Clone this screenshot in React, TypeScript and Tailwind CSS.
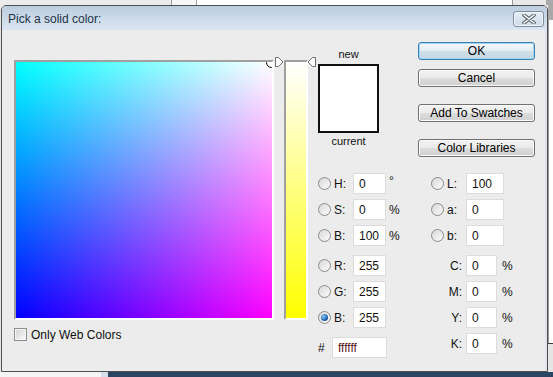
import React from "react";

const font = "font-['Liberation_Sans',Arial,sans-serif]";

function Radio({ checked = false }: { checked?: boolean }) {
  return (
    <div className="w-[13px] h-[13px] rounded-full border border-[#8a8a8a] bg-[linear-gradient(135deg,#d8d8d8,#fbfbfb)] flex items-center justify-center shrink-0">
      {checked && (
        <div className="w-[7px] h-[7px] rounded-full bg-[radial-gradient(circle_at_35%_35%,#8ec8f5,#1b63b4_60%,#0e3f7a)]" />
      )}
    </div>
  );
}

function Field({ value, width = "w-[33px]", color = "text-[#111]" }: { value: string; width?: string; color?: string }) {
  return (
    <div className={`${width} h-[21px] bg-white border border-[#dcdcdc] pl-[5px] flex items-center text-[12px] ${color} shrink-0`}>
      {value}
    </div>
  );
}

function Btn({ label, focused = false }: { label: string; focused?: boolean }) {
  return (
    <div
      className={`h-[18px] w-[117px] rounded-[3px] border flex items-center justify-center text-[12px] text-black ${
        focused
          ? "border-[#3c7fb1] shadow-[inset_0_0_0_1px_#9fd5f5] bg-[linear-gradient(to_bottom,#f4f8fb_0%,#e3edf4_50%,#cfdfea_51%,#c6d8e5_100%)]"
          : "border-[#707070] shadow-[inset_0_0_0_1px_#fcfcfc] bg-[linear-gradient(to_bottom,#f2f2f2_0%,#ebebeb_50%,#dddddd_51%,#cfcfcf_100%)]"
      }`}
    >
      {label}
    </div>
  );
}

function Arrow({ flip = false }: { flip?: boolean }) {
  return (
    <svg width="9" height="10" viewBox="0 0 9 10" className={flip ? "-scale-x-100" : ""}>
      <path d="M0.5 0.5 H3.5 L8 5 L3.5 9.5 H0.5 Z" fill="#fff" stroke="#6e6e6e" strokeWidth="1" />
    </svg>
  );
}

function HsbRow({ label, value, unit, checked = false }: { label: string; value: string; unit?: string; checked?: boolean }) {
  return (
    <div className="flex items-center h-[21px]">
      <Radio checked={checked} />
      <span className="ml-[3px] w-[19px]">{label}</span>
      <Field value={value} />
      {unit && <span className={`ml-[3px] ${unit === "°" ? "-mt-[6px]" : ""}`}>{unit}</span>}
    </div>
  );
}

function CmykRow({ label, value }: { label: string; value: string }) {
  return (
    <div className="flex items-center h-[21px]">
      <span className="w-[31px] text-right">{label}</span>
      <div className="ml-[4px]">
        <Field value={value} width="w-[31px]" />
      </div>
      <span className="ml-[5px]">%</span>
    </div>
  );
}

export default function App() {
  return (
    <div className={`w-[553px] h-[377px] overflow-hidden bg-[#f3f3f3] flex flex-col ${font} text-[12px] text-[#111]`}>
      {/* desktop behind, top strip */}
      <div className="h-[5px] flex shrink-0">
        <div className="w-[171px] bg-[#ebebeb]" />
        <div className="w-[1px] bg-[#a0a0a0]" />
        <div className="w-[24px] bg-[#f7f7f7]" />
        <div className="w-[1px] bg-[#a0a0a0]" />
        <div className="w-[315px] bg-white" />
        <div className="w-[1px] bg-[#9a9a9a]" />
        <div className="w-[33px] bg-[#e9e9e9]" />
        <div className="flex-1 bg-[#a9a9a9]" />
      </div>

      <div className="flex h-[367px] shrink-0">
        <div className="w-[1px] bg-[#e6e6e6]" />

        {/* dialog window */}
        <div className="w-[547px] h-[367px] border border-[#4e4e4e] rounded-t-[5px] overflow-hidden flex flex-col bg-[#ececec]">
          <div className="h-[24px] shrink-0 bg-[linear-gradient(to_bottom,#bccddf,#dbe6f2)] flex items-center pl-[6px] pr-[3px]">
            <span className="text-[12px] text-[#22344a] mt-[2px]">Pick a solid color:</span>
            <div className="ml-auto mt-[2px] w-[31px] h-[16px] rounded-[3px] border border-[#7f8fa3] bg-[linear-gradient(to_bottom,#e6edf5,#cfdbe8)] shadow-[inset_0_0_0_1px_#eef3f8] flex items-center justify-center">
              <svg width="14" height="10" viewBox="0 0 14 10">
                <path d="M2 1 L12 9 M12 1 L2 9" stroke="#5d6670" strokeWidth="3.6" strokeLinecap="round" />
                <path d="M2 1 L12 9 M12 1 L2 9" stroke="#fff" strokeWidth="1.6" strokeLinecap="round" />
              </svg>
            </div>
          </div>

          {/* body */}
          <div className="flex-1 flex pl-[12px] border-r-2 border-[#dfe4ea]">
            {/* picker column */}
            <div className="w-[302px] pt-[30px]">
              <div className="flex">
                <div className="relative w-[260px] h-[260px] border-2 border-t-[#a0a0a0] border-l-[#a0a0a0] border-r-white border-b-white overflow-hidden">
                  <div className="w-[256px] h-[256px] bg-[#0000ff] bg-[linear-gradient(to_right,#000000,#ff0000),linear-gradient(to_bottom,#00ff00,#000000)] bg-blend-screen" />
                  <div className="absolute left-[250px] top-[-5px] w-[11px] h-[11px] rounded-full border border-black shadow-[0_0_0_1px_#fff]" />
                </div>
                <div className="relative w-[42px] h-[260px]">
                  <div className="ml-[10px] w-[24px] h-[260px] border-2 border-t-[#a0a0a0] border-l-[#a0a0a0] border-r-white border-b-white">
                    <div className="w-[20px] h-[256px] bg-[linear-gradient(to_bottom,#ffffff,#ffff00)]" />
                  </div>
                  <div className="absolute left-[1px] top-[-3px]">
                    <Arrow />
                  </div>
                  <div className="absolute left-[33px] top-[-3px]">
                    <Arrow flip />
                  </div>
                </div>
              </div>
              <div className="mt-[8px] h-[13px] leading-[14px] flex items-center">
                <div className="w-[13px] h-[13px] border border-[#8e8f8f] bg-[linear-gradient(135deg,#d2d2d2,#fbfbfb)] shadow-[inset_0_0_0_1px_#f4f4f4]" />
                <span className="ml-[4px]">Only Web Colors</span>
              </div>
            </div>

            {/* right side */}
            <div className="ml-[2px] w-[217px] pt-[12px]">
              <div className="h-[131px] flex">
                <div className="w-[61px] flex flex-col">
                  <div className="h-[22px] pt-[5px] leading-[14px] text-[11px] text-center">new</div>
                  <div className="h-[69px] border-2 border-[#111] bg-white" />
                  <div className="pt-[1px] leading-[14px] text-[11px] text-center">current</div>
                </div>
                <div className="ml-[39px] flex flex-col">
                  <Btn label="OK" focused />
                  <div className="mt-[9px]">
                    <Btn label="Cancel" />
                  </div>
                  <div className="mt-[17px]">
                    <Btn label="Add To Swatches" />
                  </div>
                  <div className="mt-[17px]">
                    <Btn label="Color Libraries" />
                  </div>
                </div>
              </div>

              <div className="flex">
                <div className="w-[113px] flex flex-col gap-[5px]">
                  <HsbRow label="H:" value="0" unit="°" />
                  <HsbRow label="S:" value="0" unit="%" />
                  <HsbRow label="B:" value="100" unit="%" />
                  <div className="mt-[4px]">
                    <HsbRow label="R:" value="255" />
                  </div>
                  <HsbRow label="G:" value="255" />
                  <HsbRow label="B:" value="255" checked />
                  <div className="mt-[4px] flex items-center h-[21px]">
                    <span className="w-[14px]">#</span>
                    <Field value="ffffff" width="w-[55px]" color="text-[#5a1414]" />
                  </div>
                </div>
                <div className="flex flex-col gap-[5px]">
                  {[
                    ["L:", "100"],
                    ["a:", "0"],
                    ["b:", "0"],
                  ].map(([l, v]) => (
                    <div key={l} className="flex items-center h-[21px]">
                      <Radio />
                      <span className="ml-[3px] w-[19px]">{l}</span>
                      <Field value={v} width="w-[38px]" />
                    </div>
                  ))}
                  <div className="mt-[4px]">
                    <CmykRow label="C:" value="0" />
                  </div>
                  <CmykRow label="M:" value="0" />
                  <CmykRow label="Y:" value="0" />
                  <CmykRow label="K:" value="0" />
                </div>
              </div>
            </div>
          </div>
        </div>

        <div className="w-[5px] flex flex-col">
          <div className="h-[15px] bg-[#a9a9a9]" />
          <div className="h-[323px] bg-white border-l border-[#9a9a9a]" />
          <div className="h-[1px] bg-[#3a3a3a]" />
          <div className="flex-1 bg-[#e4e4e4]" />
        </div>
      </div>

      {/* desktop bottom strip */}
      <div className="flex-1 flex">
        <div className="w-[101px] bg-[#f5f5f5]" />
        <div className="w-[7px] bg-[#d6dfe9]" />
        <div className="flex-1 bg-[#2a4461]" />
      </div>
    </div>
  );
}
